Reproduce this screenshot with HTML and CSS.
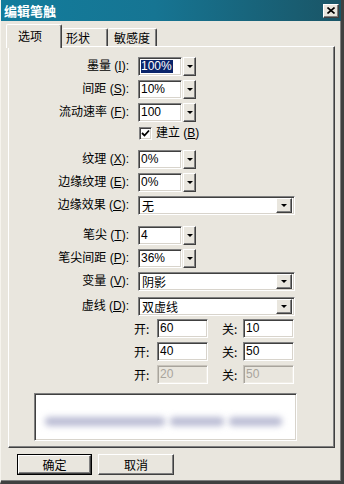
FILE: index.html
```html
<!DOCTYPE html>
<html>
<head>
<meta charset="utf-8">
<link rel="stylesheet" href="styles.css">
</head>
<body>
<div class="window">
  <div class="titlebar">
    <span class="title">编辑笔触</span>
    <span class="close raised"><svg width="8" height="7" viewBox="0 0 8 7"><path d="M0.5 0.5 L7.5 6.5 M7.5 0.5 L0.5 6.5" stroke="#000" stroke-width="1.6"/></svg></span>
  </div>
  <div class="tabs">
    <div class="tab active t1">选项</div>
    <div class="tab t2">形状</div>
    <div class="tab t3">敏感度</div>
  </div>
  <div class="panel">
    <div class="row">
      <span class="lbl">墨量 (<u>I</u>):</span>
      <span class="field sunken"><span class="sel">100%</span></span>
      <span class="dd raised"><i class="tri"></i></span>
    </div>
    <div class="row g4">
      <span class="lbl">间距 (<u>S</u>):</span>
      <span class="field sunken">10%</span>
      <span class="dd raised"><i class="tri"></i></span>
    </div>
    <div class="row g4">
      <span class="lbl">流动速率 (<u>F</u>):</span>
      <span class="field sunken">100</span>
      <span class="dd raised"><i class="tri"></i></span>
    </div>
    <div class="row check-row">
      <span class="lbl"></span>
      <span class="checkbox"><svg width="9" height="9" viewBox="0 0 9 9"><path d="M1 4 L3.5 6.5 L8 1.5" fill="none" stroke="#000" stroke-width="1.8"/></svg></span>
      <span class="check-label">建立 (<u>B</u>)</span>
    </div>
    <div class="row g10">
      <span class="lbl">纹理 (<u>X</u>):</span>
      <span class="field sunken">0%</span>
      <span class="dd raised"><i class="tri"></i></span>
    </div>
    <div class="row g4">
      <span class="lbl">边缘纹理 (<u>E</u>):</span>
      <span class="field sunken">0%</span>
      <span class="dd raised"><i class="tri"></i></span>
    </div>
    <div class="row g4">
      <span class="lbl">边缘效果 (<u>C</u>):</span>
      <span class="combo sunken"><span class="combo-text">无</span><span class="combo-btn raised"><i class="tri"></i></span></span>
    </div>
    <div class="row g11">
      <span class="lbl">笔尖 (<u>T</u>):</span>
      <span class="field sunken">4</span>
      <span class="dd raised"><i class="tri"></i></span>
    </div>
    <div class="row g4">
      <span class="lbl">笔尖间距 (<u>P</u>):</span>
      <span class="field sunken">36%</span>
      <span class="dd raised"><i class="tri"></i></span>
    </div>
    <div class="row g4">
      <span class="lbl">变量 (<u>V</u>):</span>
      <span class="combo sunken"><span class="combo-text">阴影</span><span class="combo-btn raised"><i class="tri"></i></span></span>
    </div>
    <div class="row g6">
      <span class="lbl">虚线 (<u>D</u>):</span>
      <span class="combo sunken"><span class="combo-text">双虚线</span><span class="combo-btn raised"><i class="tri"></i></span></span>
    </div>
    <div class="row dash g3">
      <span class="dl">开:</span><span class="dfield sunken">60</span>
      <span class="dl dl2">关:</span><span class="dfield sunken">10</span>
    </div>
    <div class="row dash g4">
      <span class="dl">开:</span><span class="dfield sunken">40</span>
      <span class="dl dl2">关:</span><span class="dfield sunken">50</span>
    </div>
    <div class="row dash g4 disabled">
      <span class="dl">开:</span><span class="dfield sunken">20</span>
      <span class="dl dl2">关:</span><span class="dfield sunken">50</span>
    </div>
    <div class="preview sunken">
      <span class="blur b1"></span><span class="blur b2"></span><span class="blur b3"></span>
    </div>
  </div>
  <div class="buttons">
    <div class="btn default"><span class="btn-in raised">确定</span></div>
    <div class="btn"><span class="btn-in raised">取消</span></div>
  </div>
</div>
</body>
</html>
```
FILE: styles.css
```css
* { box-sizing: border-box; }
html, body { margin: 0; padding: 0; background: #e9e6de; }
body {
  font-family: "Liberation Sans", "Noto Sans CJK SC", sans-serif;
  font-size: 12px;
  color: #000;
}
u { text-decoration: underline; text-underline-offset: 1px; }

.window {
  width: 344px;
  height: 484px;
  background: #e9e6de;
  border-left: 1px solid #f6f4ee;
  border-right: 3px solid #404040;
  border-bottom: 3px solid #404040;
  box-shadow: inset -1px -1px 0 #808080;
  display: flex;
  flex-direction: column;
}

.titlebar {
  height: 21px;
  background: linear-gradient(to right, #127c9c 0%, #167593 45%, #1a5566 100%);
  display: flex;
  align-items: center;
  justify-content: space-between;
  padding: 0 2px 0 3px;
}
.title {
  color: #fff;
  font-weight: bold;
  font-size: 13px;
  line-height: 15px;
  font-family: "Noto Sans CJK SC", sans-serif;
}
.close {
  width: 16px;
  height: 14px;
  background: #e9e6de;
  display: flex;
  align-items: center;
  justify-content: center;
}

.raised {
  border-top: 1px solid #fff;
  border-left: 1px solid #fff;
  border-right: 1px solid #404040;
  border-bottom: 1px solid #404040;
  box-shadow: inset -1px -1px 0 #808080;
}
.sunken {
  border-top: 1px solid #808080;
  border-left: 1px solid #808080;
  border-right: 1px solid #fff;
  border-bottom: 1px solid #fff;
  box-shadow: inset 1px 1px 0 #404040, inset -1px -1px 0 #d8d4cc;
}

.tabs {
  height: 25px;
  display: flex;
  align-items: flex-end;
  padding-left: 5px;
}
.tab {
  height: 18px;
  background: #e9e6de;
  border-top: 1px solid #fff;
  border-left: 1px solid #fff;
  border-right: 1px solid #404040;
  box-shadow: inset -1px 0 0 #808080;
  border-radius: 2px 2px 0 0;
  line-height: 17px;
  font-family: "Noto Sans CJK SC", sans-serif;
  font-size: 12px;
}
.tab.active {
  height: 24px;
  margin-bottom: -2px;
  position: relative;
  z-index: 2;
  line-height: 21px;
}
.t1 { width: 56px; padding-left: 11px; }
.t2 { width: 46px; padding-left: 4px; border-left: none; }
.t3 { width: 49px; padding-left: 6px; border-left: none; }

.panel {
  margin-left: 7px;
  width: 327px;
  height: 402px;
  border-top: 1px solid #fff;
  border-left: 1px solid #fff;
  border-right: 1px solid #404040;
  border-bottom: 1px solid #404040;
  box-shadow: inset -1px -1px 0 #808080;
  padding-top: 10px;
  padding-left: 1px;
  display: flex;
  flex-direction: column;
}

.row {
  display: flex;
  align-items: center;
  height: 19px;
  flex: none;
}
.g3 { margin-top: 3px; }
.g4 { margin-top: 4px; }
.g6 { margin-top: 6px; }
.g10 { margin-top: 10px; }
.g11 { margin-top: 11px; }

.lbl {
  width: 119px;
  text-align: right;
  margin-right: 9px;
  white-space: nowrap;
  line-height: 19px;
}

.field {
  width: 44px;
  height: 19px;
  background: #fff;
  padding: 0 0 0 2px;
  line-height: 17px;
  display: flex;
  align-items: center;
}
.sel {
  background: #0a246a;
  color: #fff;
  line-height: 13px;
  padding: 0 1px 0 0;
}
.dd {
  width: 13px;
  height: 19px;
  margin-left: 1px;
  background: #e9e6de;
  display: flex;
  align-items: center;
  justify-content: center;
}
.tri {
  width: 0;
  height: 0;
  border-left: 3px solid transparent;
  border-right: 3px solid transparent;
  border-top: 3px solid #000;
  display: block;
}

.check-row { height: 13px; margin-top: 5px; }
.checkbox {
  width: 13px;
  height: 13px;
  margin-left: 1px;
  background: #fff;
  border-top: 1px solid #808080;
  border-left: 1px solid #808080;
  border-right: 1px solid #fff;
  border-bottom: 1px solid #fff;
  box-shadow: inset 1px 1px 0 #404040, inset -1px -1px 0 #d8d4cc;
  display: flex;
  align-items: center;
  justify-content: center;
}
.check-label { margin-left: 4px; line-height: 13px; }

.combo {
  width: 157px;
  height: 19px;
  background: #fff;
  display: flex;
  align-items: center;
  justify-content: space-between;
  padding: 2px 2px 2px 3px;
}
.combo-text {
  font-family: "Noto Sans CJK SC", sans-serif;
  line-height: 15px;
}
.combo-btn {
  width: 16px;
  height: 15px;
  background: #e9e6de;
  display: flex;
  align-items: center;
  justify-content: center;
}

.dash { padding-left: 124px; }
.dl {
  width: 23px;
  line-height: 19px;
  font-family: "Noto Sans CJK SC", sans-serif;
}
.dl2 { margin-left: 14px; width: 21px; }
.dfield {
  width: 51px;
  height: 19px;
  background: #fff;
  padding-left: 2px;
  line-height: 17px;
}
.disabled .dfield {
  background: #e9e6de;
  color: #a8a49c;
  box-shadow: inset 1px 1px 0 #a8a49c, inset -1px -1px 0 #f0ede6;
  border-top-color: #c8c4bc;
  border-left-color: #c8c4bc;
}

.preview {
  margin-top: 9px;
  margin-left: 24px;
  width: 263px;
  height: 48px;
  background: #fff;
  display: flex;
  align-items: center;
  padding-left: 10px;
  padding-top: 8px;
}
.blur {
  height: 9px;
  background: #b9bbd3;
  filter: blur(3px);
  border-radius: 4px;
  display: block;
}
.b1 { width: 120px; }
.b2 { width: 54px; margin-left: 5px; }
.b3 { width: 53px; margin-left: 5px; }

.buttons {
  display: flex;
  margin-top: 6px;
  padding-left: 16px;
  gap: 6px;
}
.btn {
  width: 76px;
  height: 21px;
  display: flex;
}
.btn.default { width: 75px; border: 1px solid #000; }
.btn-in {
  flex: 1;
  display: flex;
  align-items: center;
  justify-content: center;
  font-family: "Noto Sans CJK SC", sans-serif;
  background: #e9e6de;
}
```
